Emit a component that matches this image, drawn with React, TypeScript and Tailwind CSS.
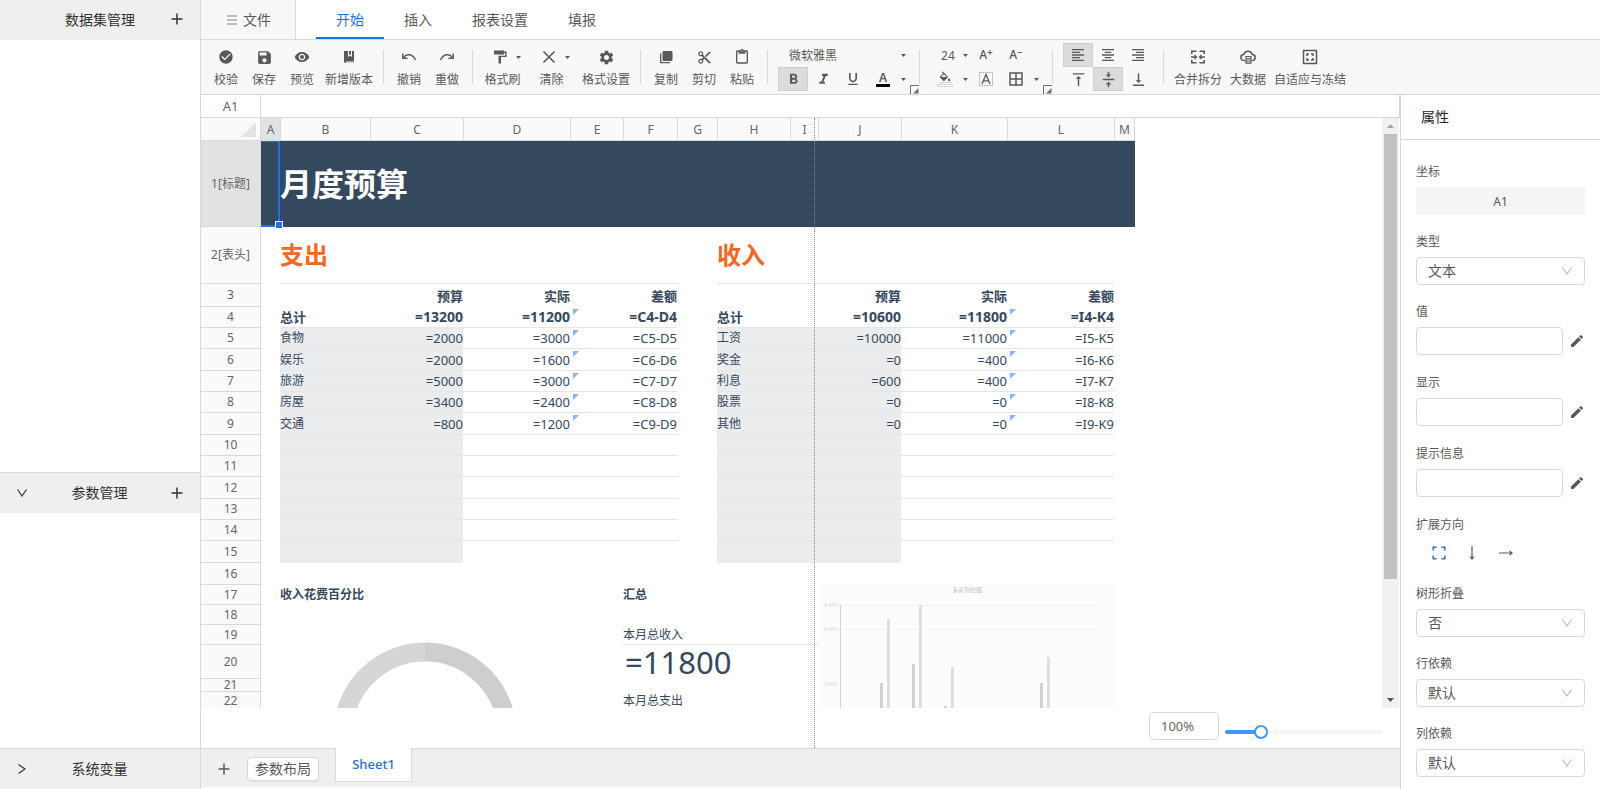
import { ReactNode, useState } from "react";
import {
  MdBorderAll,
  MdCheckCircle,
  MdContentCut,
  MdContentPaste,
  MdEdit,
  MdFormatAlignCenter,
  MdFormatAlignLeft,
  MdFormatAlignRight,
  MdFormatBold,
  MdFormatColorFill,
  MdFormatItalic,
  MdFormatUnderlined,
  MdSave,
  MdSettings,
  MdVerticalAlignBottom,
  MdVerticalAlignCenter,
  MdVerticalAlignTop,
  MdVisibility,
} from "react-icons/md";

// ---------- icons ----------

function Plus() {
  return (
    <svg width="12" height="12" viewBox="0 0 12 12" stroke="currentColor" strokeWidth="1.5" fill="none">
      <path d="M6 0.5v11M0.5 6h11" />
    </svg>
  );
}

function Caret() {
  return (
    <svg width="5" height="3" viewBox="0 0 5 3" fill="currentColor">
      <path d="M0 0h5L2.500 3z" />
    </svg>
  );
}

function Chevron({ className }: { className?: string }) {
  return (
    <svg width="12" height="12" viewBox="0 0 12 12" fill="none" stroke="currentColor" strokeWidth="1.2" className={className}>
      <path d="M1.500 2.500L6 9l4.500-6.500" />
    </svg>
  );
}

function BookIcon() {
  return (
    <svg width="16" height="16" viewBox="0 0 16 16" fill="currentColor">
      <path d="M3 2h4v6l2-1.500L11 8V2h2v10.500H5.200a.6.6 0 0 0 0 1.200H13V14H4.500A1.500 1.500 0 0 1 3 12.500z" />
      <path d="M8 2h2v4L9 5.200 8 6z" />
    </svg>
  );
}

function UndoIcon({ flip }: { flip?: boolean }) {
  return (
    <svg width="16" height="16" viewBox="0 0 16 16" fill="none" stroke="currentColor" strokeWidth="1.5" className={flip ? "-scale-x-100" : ""}>
      <path d="M2.500 8.500C5.500 4.500 11.500 4.500 14.500 11" />
      <path d="M1.800 4.500v4.700h4.700" />
    </svg>
  );
}

function RollerIcon() {
  return (
    <svg width="16" height="16" viewBox="0 0 16 16" fill="currentColor">
      <path d="M2 1.500h10v1h2.500v5.500H9v6.500H6.500V6.700h6.600V3.900H12v1.600H2z" />
    </svg>
  );
}

function CloseIcon() {
  return (
    <svg width="16" height="16" viewBox="0 0 16 16" fill="none" stroke="currentColor" strokeWidth="1.600">
      <path d="M2.500 2.500l11 11M13.500 2.500l-11 11" />
    </svg>
  );
}

function CopyIcon() {
  return (
    <svg width="16" height="16" viewBox="0 0 16 16" fill="currentColor">
      <rect x="4.500" y="2" width="10" height="10" rx="1" />
      <path d="M2 4.500h1.300V13H12v1.300H2z" />
    </svg>
  );
}

function MergeIcon() {
  return (
    <svg width="16" height="16" viewBox="0 0 16 16" fill="none" stroke="currentColor" strokeWidth="1.600">
      <path d="M6.500 2.200H1.800V5M9.500 2.200h4.700V5M6.500 13.800H1.800V11M9.500 13.800h4.700V11" />
      <path d="M1 8h5M15 8h-5M4.500 6l2 2-2 2M11.500 6l-2 2 2 2" strokeWidth="1.300" />
    </svg>
  );
}

function CloudIcon() {
  return (
    <svg width="16" height="16" viewBox="0 0 16 16" fill="none" stroke="currentColor" strokeWidth="1.500">
      <path d="M5 11.500H4A3 3 0 0 1 3.700 5.500 4.500 4.500 0 0 1 12.300 5.500 3 3 0 0 1 12 11.500" />
      <path d="M6 7.500h5v6.700H6zM6 9.800h5M6 12h5" strokeWidth="1.200" />
    </svg>
  );
}

function FitIcon() {
  return (
    <svg width="16" height="16" viewBox="0 0 16 16" fill="none" stroke="currentColor" strokeWidth="1.500">
      <rect x="1.500" y="1.500" width="13" height="13" />
      <path d="M5 7V5h2M9 5h2v2M11 9v2H9M7 11H5V9" />
    </svg>
  );
}

function CornersIcon() {
  return (
    <svg width="14" height="14" viewBox="0 0 14 14" fill="none" stroke="currentColor" strokeWidth="1.500">
      <path d="M1.200 4.500V1.200h3.300M9.500 1.200h3.300v3.300M12.800 9.500v3.300H9.500M4.500 12.800H1.200V9.500" />
    </svg>
  );
}

function ArrowIcon({ down }: { down?: boolean }) {
  return (
    <svg width="16" height="16" viewBox="0 0 16 16" fill="none" stroke="currentColor" strokeWidth="1.200" className={down ? "rotate-90" : ""}>
      <path d="M1 8h13M11.500 6L14 8l-2.500 2" />
    </svg>
  );
}

function ClearFormatIcon() {
  return (
    <svg width="16" height="16" viewBox="0 0 16 16" fill="none" stroke="currentColor">
      <rect x="1.500" y="1.500" width="13" height="13" stroke="#aaa" strokeDasharray="2 1" />
      <path d="M4 13L8 3.500 12 13M5.500 9.800h5" strokeWidth="1.300" />
    </svg>
  );
}

function DialogCorner() {
  return (
    <button className="absolute right-0 bottom-0 h-[9px] w-[9px] text-gray-500" aria-label="更多">
      <svg width="9" height="9" viewBox="0 0 9 9">
        <path d="M.5 9V.5H9" fill="none" stroke="currentColor" />
        <path d="M8.500 3v5.500H3z" fill="currentColor" />
      </svg>
    </button>
  );
}

// ---------- toolbar ----------

type ToolProps = { icon: ReactNode; label: string; dropdown?: boolean };

function Tool({ icon, label, dropdown }: ToolProps) {
  return (
    <button className="flex h-[54px] min-w-[38px] flex-col items-center px-1 pt-[9px] text-xs leading-4 whitespace-nowrap">
      <span className={dropdown ? "mb-[7px] flex h-4 items-center gap-2 pl-2" : "mb-[7px] flex h-4 items-center"}>
        {icon}
        {dropdown && <Caret />}
      </span>
      {label}
    </button>
  );
}

function Small({ children, active, label }: { children: ReactNode; active?: boolean; label: string }) {
  return (
    <button
      aria-label={label}
      className={
        active
          ? "flex h-6 w-[30px] items-center justify-center border border-[#cfcfcf] bg-[#dcdcdc]"
          : "flex h-6 w-[30px] items-center justify-center"
      }
    >
      {children}
    </button>
  );
}

function DropCaret({ label }: { label: string }) {
  return (
    <button aria-label={label} className="flex h-6 w-[11px] items-center justify-center">
      <Caret />
    </button>
  );
}

function FontSizeMark({ sign }: { sign: string }) {
  return (
    <span className="flex items-start text-xs leading-4 font-medium">
      A<span className="text-[10px] leading-[10px]">{sign}</span>
    </span>
  );
}

function Divider() {
  return <div className="mx-1.5 mt-2.5 h-[34px] w-px shrink-0 bg-[#d9d9d9]" />;
}

function Toolbar() {
  return (
    <div className="flex h-[55px] shrink-0 border-b border-[#d9d9dd] bg-[#f8f8f8] pl-[6px] text-[#595959]">
      <Tool icon={<MdCheckCircle size={16} />} label="校验" />
      <Tool icon={<MdSave size={17} />} label="保存" />
      <Tool icon={<MdVisibility size={16} />} label="预览" />
      <Tool icon={<BookIcon />} label="新增版本" />
      <Divider />
      <Tool icon={<UndoIcon />} label="撤销" />
      <Tool icon={<UndoIcon flip />} label="重做" />
      <Divider />
      <div className="flex gap-1 pl-px">
        <Tool icon={<RollerIcon />} label="格式刷" dropdown />
        <Tool icon={<CloseIcon />} label="清除" dropdown />
        <Tool icon={<MdSettings size={17} />} label="格式设置" />
      </div>
      <Divider />
      <Tool icon={<CopyIcon />} label="复制" />
      <Tool icon={<MdContentCut size={15} />} label="剪切" />
      <Tool icon={<MdContentPaste size={16} />} label="粘贴" />
      <Divider />
      <div className="relative -mr-1.5 flex w-[145px] flex-col pt-[3px] pl-1">
        <button className="flex h-6 w-[131px] items-center justify-between pt-px pr-[3px] pl-[11px] text-xs">
          微软雅黑
          <Caret />
        </button>
        <div className="flex">
          <Small label="加粗" active><MdFormatBold size={17} /></Small>
          <Small label="斜体"><MdFormatItalic size={17} /></Small>
          <Small label="下划线"><MdFormatUnderlined size={16} /></Small>
          <Small label="字体颜色">
            <span className="border-b-3 border-black px-[3px] text-xs leading-[13px] font-semibold">A</span>
          </Small>
          <DropCaret label="选择字体颜色" />
        </div>
        <DialogCorner />
      </div>
      <Divider />
      <div className="relative -mr-1.5 flex w-[126px] flex-col pt-[3px] pl-1">
        <div className="flex">
          <button className="flex h-6 w-[41px] items-center justify-between pt-px pr-[3px] pl-[11px] text-xs">
            24
            <Caret />
          </button>
          <Small label="增大字号"><FontSizeMark sign="+" /></Small>
          <Small label="减小字号"><FontSizeMark sign="−" /></Small>
        </div>
        <div className="flex">
          <Small label="填充颜色">
            <span className="flex flex-col items-center">
              <svg width="14" height="12" viewBox="0 0 24 20">
                <MdFormatColorFill size={24} />
              </svg>
              <span className="mt-px h-[3px] w-4 border border-[#d9d9d9] bg-white" />
            </span>
          </Small>
          <DropCaret label="选择填充颜色" />
          <Small label="清除样式"><ClearFormatIcon /></Small>
          <Small label="边框"><MdBorderAll size={18} /></Small>
          <DropCaret label="选择边框" />
        </div>
        <DialogCorner />
      </div>
      <Divider />
      <div className="mr-1 flex w-[94px] flex-wrap content-start pt-[3px] pl-1">
        <Small label="左对齐" active><MdFormatAlignLeft size={16} /></Small>
        <Small label="居中"><MdFormatAlignCenter size={16} /></Small>
        <Small label="右对齐"><MdFormatAlignRight size={16} /></Small>
        <Small label="顶端对齐"><MdVerticalAlignTop size={17} /></Small>
        <Small label="垂直居中" active><MdVerticalAlignCenter size={17} /></Small>
        <Small label="底端对齐"><MdVerticalAlignBottom size={17} /></Small>
      </div>
      <Divider />
      <Tool icon={<MergeIcon />} label="合并拆分" />
      <Tool icon={<CloudIcon />} label="大数据" />
      <Tool icon={<FitIcon />} label="自适应与冻结" />
    </div>
  );
}

// ---------- sheet ----------

const columns = [
  { name: "A", width: 19 },
  { name: "B", width: 90 },
  { name: "C", width: 93 },
  { name: "D", width: 107 },
  { name: "E", width: 53 },
  { name: "F", width: 54 },
  { name: "G", width: 40 },
  { name: "H", width: 73 },
  { name: "I", width: 28 },
  { name: "J", width: 83 },
  { name: "K", width: 106 },
  { name: "L", width: 107 },
  { name: "M", width: 21 },
];

const rowHeights = [86, 57, 23, 21, 21, 22, 21, 21, 22, 21, 21, 22, 21, 21, 22, 22, 20, 20, 20, 34, 13, 18];

const cells: Record<string, string> = {
  B1: "月度预算",
  B2: "支出", H2: "收入",
  C3: "预算", D3: "实际", F3: "差额", J3: "预算", K3: "实际", L3: "差额",
  B4: "总计", C4: "=13200", D4: "=11200", F4: "=C4-D4", H4: "总计", J4: "=10600", K4: "=11800", L4: "=I4-K4",
  B5: "食物", C5: "=2000", D5: "=3000", F5: "=C5-D5", H5: "工资", J5: "=10000", K5: "=11000", L5: "=I5-K5",
  B6: "娱乐", C6: "=2000", D6: "=1600", F6: "=C6-D6", H6: "奖金", J6: "=0", K6: "=400", L6: "=I6-K6",
  B7: "旅游", C7: "=5000", D7: "=3000", F7: "=C7-D7", H7: "利息", J7: "=600", K7: "=400", L7: "=I7-K7",
  B8: "房屋", C8: "=3400", D8: "=2400", F8: "=C8-D8", H8: "股票", J8: "=0", K8: "=0", L8: "=I8-K8",
  B9: "交通", C9: "=800", D9: "=1200", F9: "=C9-D9", H9: "其他", J9: "=0", K9: "=0", L9: "=I9-K9",
  B17: "收入花费百分比", F17: "汇总",
  F19: "本月总收入",
  F20: "=11800",
  F22: "本月总支出",
};

function rowLabel(row: number) {
  if (row === 1) return "1[标题]";
  if (row === 2) return "2[表头]";
  return String(row);
}

function cellClass(col: string, row: number) {
  const classes = ["relative p-0 whitespace-nowrap"];
  if (row === 1) classes.push("text-[32px] leading-10 font-bold text-white");
  else if (row === 2) classes.push("text-2xl font-bold text-[#f96621]");
  else if (row === 3) classes.push("text-[13px] leading-4 font-bold");
  else if (row === 4) classes.push(/[BH]/.test(col) ? "text-[13px] leading-4 font-bold" : "text-sm leading-4 font-bold");
  else if (row === 17) classes.push("text-xs leading-4 font-bold");
  else if (row === 20) classes.push("pl-0.5 text-[31px] leading-8");
  else if (row > 17 || /[BH]/.test(col)) classes.push("text-xs leading-3");
  else classes.push("text-[13px] leading-4");

  if (row > 2 && row < 10 && /[CDFJKL]/.test(col)) classes.push("text-right");
  if (row > 4 && row < 16 && /[BCHIJ]/.test(col)) classes.push("bg-[#ebecee]");
  if ((row === 2 || (row > 3 && row < 15)) && /[B-FH-L]/.test(col)) classes.push("border-b border-[#e5e6e8]");
  if (row === 19 && /[F-I]/.test(col)) classes.push("border-b border-[#e5e6e8]");
  if (row === 1 && col === "A") classes.push("z-10");
  return classes.join(" ");
}

function Grid() {
  return (
    <table className="w-[934px] table-fixed border-separate border-spacing-0 text-[#34495e]">
      <colgroup>
        <col style={{ width: 60 }} />
        {columns.map((c) => (
          <col key={c.name} style={{ width: c.width }} />
        ))}
      </colgroup>
      <thead>
        <tr className="h-[23px] bg-[#fafafa] text-xs leading-4 text-[#666]">
          <th className="border-r border-b border-[#d9d9dd] p-0">
            <svg width="15" height="15" viewBox="0 0 15 15" className="mr-1 ml-auto">
              <path d="M15 0v15H0z" fill="#e1e3e3" />
            </svg>
          </th>
          {columns.map((c) => (
            <th
              key={c.name}
              scope="col"
              className={
                c.name === "A"
                  ? "border-b border-[#d9d9dd] bg-[#e1e3e3] p-0 pt-0.5 font-normal"
                  : "border-b border-l border-[#d9d9dd] p-0 pt-0.5 font-normal last:border-r"
              }
            >
              {c.name}
            </th>
          ))}
        </tr>
      </thead>
      <tbody>
        {rowHeights.map((height, i) => {
          const row = i + 1;
          return (
            <tr key={row} style={{ height }} className={row === 1 ? "bg-[#34495e]" : ""}>
              <th
                scope="row"
                className={
                  row === 1
                    ? "border-r border-b border-[#d9d9dd] bg-[#e1e3e3] p-0 text-xs leading-3 font-normal text-[#666]"
                    : "border-r border-b border-[#d9d9dd] bg-[#fafafa] p-0 text-xs leading-3 font-normal text-[#666]"
                }
              >
                {rowLabel(row)}
              </th>
              {columns.map(({ name }) => (
                <td key={name} className={cellClass(name, row)}>
                  {cells[name + row]}
                  {/* linked-cell marker, sits in the corner of the next cell */}
                  {/[DK]/.test(name) && row > 3 && row < 10 && (
                    <svg width="6" height="6" viewBox="0 0 6 6" className="absolute top-0.5 left-full ml-[3px]">
                      <path d="M0 0h6L0 6z" fill="#8ab4f8" />
                    </svg>
                  )}
                  {name === "A" && row === 1 && (
                    <span className="absolute inset-0 border-t border-r-2 border-b-2 border-[#1a73e8]">
                      <span className="absolute -right-[5px] -bottom-1 h-2 w-2 border border-white bg-[#1a73e8]" />
                    </span>
                  )}
                </td>
              ))}
            </tr>
          );
        })}
      </tbody>
    </table>
  );
}

function DonutChart() {
  return (
    <svg width="190" height="190" viewBox="0 0 190 190" fill="none" strokeWidth="19" className="absolute top-[521px] left-[129px]">
      <path d="M95 13a82 82 0 0 1 0 164" stroke="#cecece" />
      <path d="M95 177a82 82 0 0 1 0-164" stroke="#d6d6d6" />
    </svg>
  );
}

const bars = [
  { x: 61, y: 99, color: "#d2d2d2" },
  { x: 68, y: 35, color: "#dfdfdf" },
  { x: 93, y: 80, color: "#d2d2d2" },
  { x: 100, y: 21, color: "#dfdfdf" },
  { x: 125, y: 122, color: "#d2d2d2" },
  { x: 132, y: 83, color: "#dfdfdf" },
  { x: 221, y: 99, color: "#d2d2d2" },
  { x: 228, y: 73, color: "#dfdfdf" },
];

function BarChart() {
  return (
    <svg width="296" height="200" viewBox="0 0 296 200" className="absolute top-[466px] left-[618px]">
      <rect width="296" height="200" fill="#fcfcfc" />
      <text x="148" y="8" fontSize="6" fill="#c4c4c4" textAnchor="middle">多系列柱图</text>
      <path d="M21 21.500h256M21 45.500h256" stroke="#f3f3f3" />
      <path d="M21.500 21v180M19.500 21.500h2M19.500 45.500h2" stroke="#d5d5d5" />
      <g fontSize="5" fill="#d0d0d0" textAnchor="end">
        <text x="18" y="23">4,441</text>
        <text x="18" y="47">4,000</text>
        <text x="18" y="102">3,000</text>
      </g>
      {bars.map((b) => (
        <rect key={b.x} x={b.x} y={b.y} width="3" height={200 - b.y} fill={b.color} />
      ))}
    </svg>
  );
}

function Scrollbar() {
  return (
    <div className="mr-px flex w-[17px] shrink-0 flex-col items-center bg-[#f1f1f1] py-[6px]">
      <svg width="7" height="4" viewBox="0 0 7 4" className="shrink-0">
        <path d="M0 4l3.500-4L7 4z" fill="#a3a3a3" />
      </svg>
      <div className="mt-[6px] mb-auto h-[77%] w-[13px] bg-[#c1c1c1]" />
      <svg width="7" height="4" viewBox="0 0 7 4" className="shrink-0">
        <path d="M0 0l3.500 4L7 0z" fill="#505050" />
      </svg>
    </div>
  );
}

function SheetArea() {
  const [zoom, setZoom] = useState(100);

  return (
    <main className="flex min-w-0 flex-1 flex-col">
      <div className="flex h-[23px] shrink-0 border-r border-b border-[#d9d9dd] text-[#666]">
        <div className="w-[60px] border-r border-[#d9d9dd] text-center text-[13px] leading-[22px]">A1</div>
        <input aria-label="公式" className="flex-1 px-2 text-sm outline-none" />
      </div>
      <div className="relative flex min-h-0 flex-1 flex-col">
        <div className="flex min-h-0 flex-1">
          <div className="relative min-w-0 flex-1 overflow-hidden">
            <Grid />
            <DonutChart />
            <BarChart />
          </div>
          <Scrollbar />
        </div>
        <div className="flex h-10 shrink-0 items-center justify-end pr-[17px]">
          <input
            aria-label="缩放比例"
            value={zoom + "%"}
            readOnly
            className="mr-1.5 mb-2 h-7 w-[70px] self-end rounded border border-[#d9d9d9] px-[11px] text-[13px] text-[#666] outline-none"
          />
          <input
            type="range"
            aria-label="缩放"
            min={0}
            max={500}
            value={zoom}
            onChange={(e) => setZoom(Number(e.target.value))}
            className="mt-2 h-1 w-[158px] appearance-none rounded-sm outline-none [&::-webkit-slider-thumb]:h-[14px] [&::-webkit-slider-thumb]:w-[14px] [&::-webkit-slider-thumb]:appearance-none [&::-webkit-slider-thumb]:rounded-full [&::-webkit-slider-thumb]:border-2 [&::-webkit-slider-thumb]:border-[#4096f7] [&::-webkit-slider-thumb]:bg-white"
            style={{ background: `linear-gradient(to right, #4096f7 ${zoom / 5}%, #f5f5f5 ${zoom / 5}%)` }}
          />
        </div>
        {/* page break */}
        <div className="absolute inset-y-0 left-[613px] border-l border-dotted border-[#888]" />
      </div>
      <div className="mb-0.5 flex h-[39px] shrink-0 items-start border-t border-[#d9d9dd] bg-[#efefef] text-[#595959]">
        <button aria-label="新增工作表" className="ml-[17px] flex h-10 w-3 items-center">
          <Plus />
        </button>
        <button className="mt-2 ml-[17px] h-6 rounded border border-[#d9d9d9] bg-white px-[7px] text-sm leading-5 shadow-xs">
          参数布局
        </button>
        <button className="-mt-px ml-4 h-[34px] w-[77px] border border-t-0 border-[#d9d9dd] bg-white text-[13px] font-medium text-[#2670ec]">
          Sheet1
        </button>
      </div>
    </main>
  );
}

// ---------- side panels ----------

function Sidebar() {
  return (
    <aside className="flex w-[201px] shrink-0 flex-col border-r border-[#d9d9dd] text-sm text-[#333]">
      <section className="h-[472px] shrink-0">
        <h2 className="flex h-10 items-center justify-end bg-[#efefef] pr-[17px]">
          <span className="mr-9">数据集管理</span>
          <button aria-label="新增数据集" className="pb-0.5"><Plus /></button>
        </h2>
      </section>
      <section className="flex-1 border-t border-[#d9d9dd]">
        <h2 className="flex h-10 items-center justify-between bg-[#efefef] pr-[17px] pl-4">
          <button aria-label="收起"><Chevron /></button>
          参数管理
          <button aria-label="新增参数"><Plus /></button>
        </h2>
      </section>
      <section className="border-t border-[#d9d9dd]">
        <h2 className="flex h-10 items-center justify-between bg-[#efefef] pr-[29px] pl-4">
          <button aria-label="展开"><Chevron className="-rotate-90" /></button>
          系统变量
          <span />
        </h2>
      </section>
    </aside>
  );
}

function SelectField({ id, label, value }: { id: string; label: string; value: string }) {
  return (
    <div className="h-[70px]">
      <label htmlFor={id} className="block h-[25px] text-xs leading-5">{label}</label>
      <div className="relative">
        <select id={id} className="h-7 w-full appearance-none rounded border border-[#d9d9d9] bg-white px-[11px] text-sm leading-5 outline-none">
          <option>{value}</option>
        </select>
        <Chevron className="pointer-events-none absolute top-2 right-3 text-[#bfbfbf]" />
      </div>
    </div>
  );
}

function TextField({ id, label }: { id: string; label: string }) {
  return (
    <div className="h-[71px]">
      <label htmlFor={id} className="block h-[25px] text-xs leading-5">{label}</label>
      <div className="flex items-center justify-between">
        <input id={id} type="text" className="h-7 w-[147px] rounded border border-[#d9d9d9] px-2 text-sm outline-none" />
        <button type="button" aria-label={"编辑" + label}><MdEdit size={16} /></button>
      </div>
    </div>
  );
}

function Properties() {
  return (
    <aside className="flex w-[200px] shrink-0 flex-col overflow-hidden border-l border-[#d9d9dd] text-[#595959]">
      <h2 className="h-[45px] shrink-0 border-b border-[#d9d9dd] pl-5 text-sm leading-[44px] text-[#262626]">属性</h2>
      <form className="px-[15px] pt-[22px]">
        <div className="h-[70px]">
          <label htmlFor="coord" className="block h-[25px] text-xs leading-5">坐标</label>
          <input id="coord" value="A1" readOnly className="h-7 w-full bg-[#f5f5f5] text-center text-xs outline-none" />
        </div>
        <SelectField id="type" label="类型" value="文本" />
        <TextField id="value" label="值" />
        <TextField id="display" label="显示" />
        <TextField id="tip" label="提示信息" />
        <div className="h-[69px]">
          <div className="h-[25px] text-xs leading-5">扩展方向</div>
          <div className="flex h-[26px] items-center gap-[18px] pl-4">
            <button type="button" aria-label="不扩展" className="text-[#2670ec]"><CornersIcon /></button>
            <button type="button" aria-label="向下扩展"><ArrowIcon down /></button>
            <button type="button" aria-label="向右扩展"><ArrowIcon /></button>
          </div>
        </div>
        <SelectField id="fold" label="树形折叠" value="否" />
        <SelectField id="rowDep" label="行依赖" value="默认" />
        <SelectField id="colDep" label="列依赖" value="默认" />
      </form>
    </aside>
  );
}

const tabs = ["开始", "插入", "报表设置", "填报"];

export default function App() {
  const [tab, setTab] = useState("开始");

  return (
    <div className="flex h-screen overflow-hidden bg-white font-['Noto_Sans','Noto_Sans_CJK_SC',sans-serif]">
      <Sidebar />
      <div className="flex min-w-0 flex-1 flex-col">
        <nav className="flex h-10 shrink-0 border-b border-[#d9d9dd] text-sm text-[#595959]">
          <button className="mr-5 flex w-[95px] items-center gap-1.5 border-r border-[#d9d9dd] bg-[#f8f8f8] pl-[26px]">
            <svg width="10" height="10" viewBox="0 0 10 10" stroke="#aaa" strokeWidth="1.500">
              <path d="M0 1h10M0 5h10M0 9h10" />
            </svg>
            文件
          </button>
          {tabs.map((t) => (
            <button
              key={t}
              onClick={() => setTab(t)}
              className={
                t === tab
                  ? "border-y-2 border-t-transparent border-b-[#1a73e8] px-5 text-[#1a73e8]"
                  : "border-y-2 border-transparent px-5"
              }
            >
              {t}
            </button>
          ))}
        </nav>
        <Toolbar />
        <div className="flex min-h-0 flex-1">
          <SheetArea />
          <Properties />
        </div>
      </div>
    </div>
  );
}
